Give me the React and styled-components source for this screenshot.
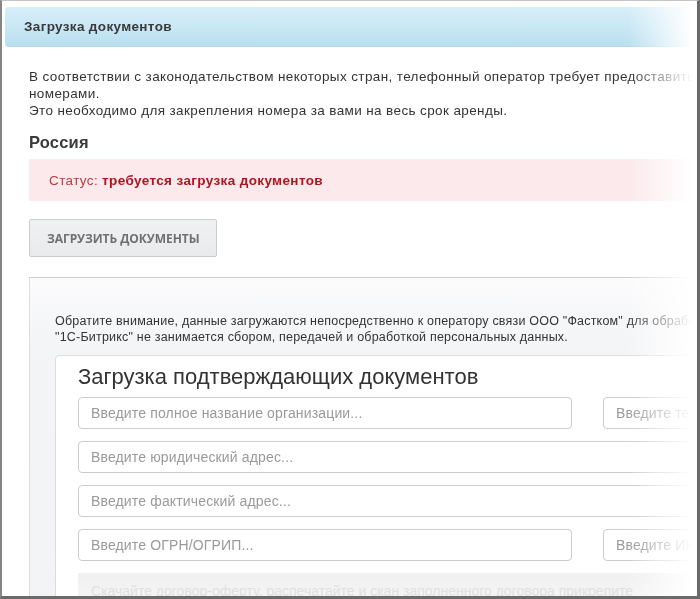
import React from 'react';
import styled, { createGlobalStyle } from 'styled-components';

const GlobalStyle = createGlobalStyle`
    html, body {
        margin: 0;
        padding: 0;
        background: #ffffff;
    }
    body {
        font-family: "Liberation Sans", Arial, sans-serif;
        color: #333333;
    }
`;

const Frame = styled.div`
    box-sizing: border-box;
    width: 700px;
    height: 599px;
    overflow: hidden;
    background: #ffffff;
    border-left: 2px solid #858585;
    border-right: 3px solid #6a6a6a;
    border-bottom: 3px solid #6a6a6a;
    border-top: 1px solid #c4c4c4;
`;

const Faded = styled.div`
    width: 1100px;
    -webkit-mask-image: linear-gradient(to right, #000 0, #000 625px, transparent 690px);
    mask-image: linear-gradient(to right, #000 0, #000 625px, transparent 690px);
`;

const Header = styled.div`
    margin: 6px 0 0 3px;
    height: 39px;
    display: flex;
    align-items: center;
    padding-left: 19px;
    border-radius: 4px;
    background: linear-gradient(to bottom, #d8eef8 0%, #c6e6f4 60%, #b9dff0 100%);
    border-bottom: 1px solid #b3d9ea;
    font-size: 13.5px;
    letter-spacing: 0.35px;
    font-weight: bold;
    color: #3a3a3a;
`;

const Body = styled.div`
    padding: 21px 0 0 27px;
`;

const Intro = styled.p`
    margin: 0;
    font-size: 13.5px;
    letter-spacing: 0.38px;
    line-height: 17px;
    white-space: nowrap;
    color: #333333;
`;

const Country = styled.h2`
    margin: 13px 0 0;
    font-size: 16.5px;
    letter-spacing: 0.2px;
    line-height: 20px;
    font-weight: bold;
    color: #3a3a3a;
`;

const Status = styled.div`
    margin-top: 7px;
    height: 42px;
    display: flex;
    align-items: center;
    padding-left: 20px;
    background: #fbe9ec;
    font-size: 13.5px;
    letter-spacing: 0.38px;
    color: #bd3a42;
`;

const StatusValue = styled.b`
    margin-left: 4px;
    color: #b1141f;
`;

const Button = styled.button`
    display: block;
    margin-top: 18px;
    width: 188px;
    height: 38px;
    padding: 0 0 0 17px;
    text-align: left;
    background: linear-gradient(to bottom, #f0f1f2, #e9eaec);
    border: 1px solid #cbcccd;
    border-radius: 2px;
    font-family: "Open Sans", sans-serif;
    font-size: 12px;
    font-weight: 700;
    letter-spacing: -0.05px;
    color: #707070;
`;

const Panel = styled.div`
    margin-top: 20px;
    border-top: 1px solid #cfd1d3;
    border-left: 1px solid #dcdde0;
    padding: 35px 0 0 25px;
    background: linear-gradient(to bottom, #fbfbfc 0, #f4f5f7 60px, #f2f3f5 100%);
`;

const Notice = styled.p`
    margin: 0 0 10px;
    font-size: 12.5px;
    letter-spacing: 0.2px;
    line-height: 16px;
    white-space: nowrap;
    color: #333333;
`;

const Card = styled.div`
    background: #ffffff;
    border: 1px solid #dcdcdc;
    border-radius: 4px 0 0 0;
    padding: 8px 0 10px 22px;
`;

const CardTitle = styled.h3`
    margin: 0 0 8px;
    font-size: 22px;
    line-height: 25px;
    font-weight: normal;
    color: #333333;
`;

const Grid = styled.div`
    display: grid;
    grid-template-columns: 494px 494px;
    column-gap: 31px;
    row-gap: 12px;
`;

const Input = styled.input`
    grid-column: ${props => props.$wide ? '1 / -1' : 'auto'};
    box-sizing: border-box;
    height: 32px;
    padding: 0 12px;
    border: 1px solid #cccccc;
    border-radius: 4px;
    background: #ffffff;
    font-family: "Liberation Sans", Arial, sans-serif;
    font-size: 14px;
    letter-spacing: 0.15px;
    color: #333333;
    outline: none;

    &::placeholder {
        color: #9a9a9a;
    }
`;

const Hint = styled.div`
    grid-column: 1 / -1;
    height: 30px;
    padding: 10px 0 0 13px;
    background: linear-gradient(to bottom, #f0f0f0, #f7f7f7);
    font-size: 14px;
    color: #e0e0e0;
    white-space: nowrap;
`;

export default function App(){
    return (
        <Frame>
            <GlobalStyle />
            <Faded>
                <Header>Загрузка документов</Header>
                <Body>
                    <Intro>
                        В соответствии с законодательством некоторых стран, телефонный оператор требует предоставить документы для работы с<br />
                        номерами.<br />
                        Это необходимо для закрепления номера за вами на весь срок аренды.
                    </Intro>
                    <Country>Россия</Country>
                    <Status>
                        Статус:<StatusValue>требуется загрузка документов</StatusValue>
                    </Status>
                    <Button>ЗАГРУЗИТЬ ДОКУМЕНТЫ</Button>
                    <Panel>
                        <Notice>
                            Обратите внимание, данные загружаются непосредственно к оператору связи ООО "Фастком" для обработки и хранения.<br />
                            "1С-Битрикс" не занимается сбором, передачей и обработкой персональных данных.
                        </Notice>
                        <Card>
                            <CardTitle>Загрузка подтверждающих документов</CardTitle>
                            <Grid>
                                <Input placeholder="Введите полное название организации..." />
                                <Input placeholder="Введите телефон..." />
                                <Input $wide placeholder="Введите юридический адрес..." />
                                <Input $wide placeholder="Введите фактический адрес..." />
                                <Input placeholder="Введите ОГРН/ОГРИП..." />
                                <Input placeholder="Введите ИНН..." />
                                <Hint>Скачайте договор-оферту, распечатайте и скан заполненного договора прикрепите</Hint>
                            </Grid>
                        </Card>
                    </Panel>
                </Body>
            </Faded>
        </Frame>
    );
}
